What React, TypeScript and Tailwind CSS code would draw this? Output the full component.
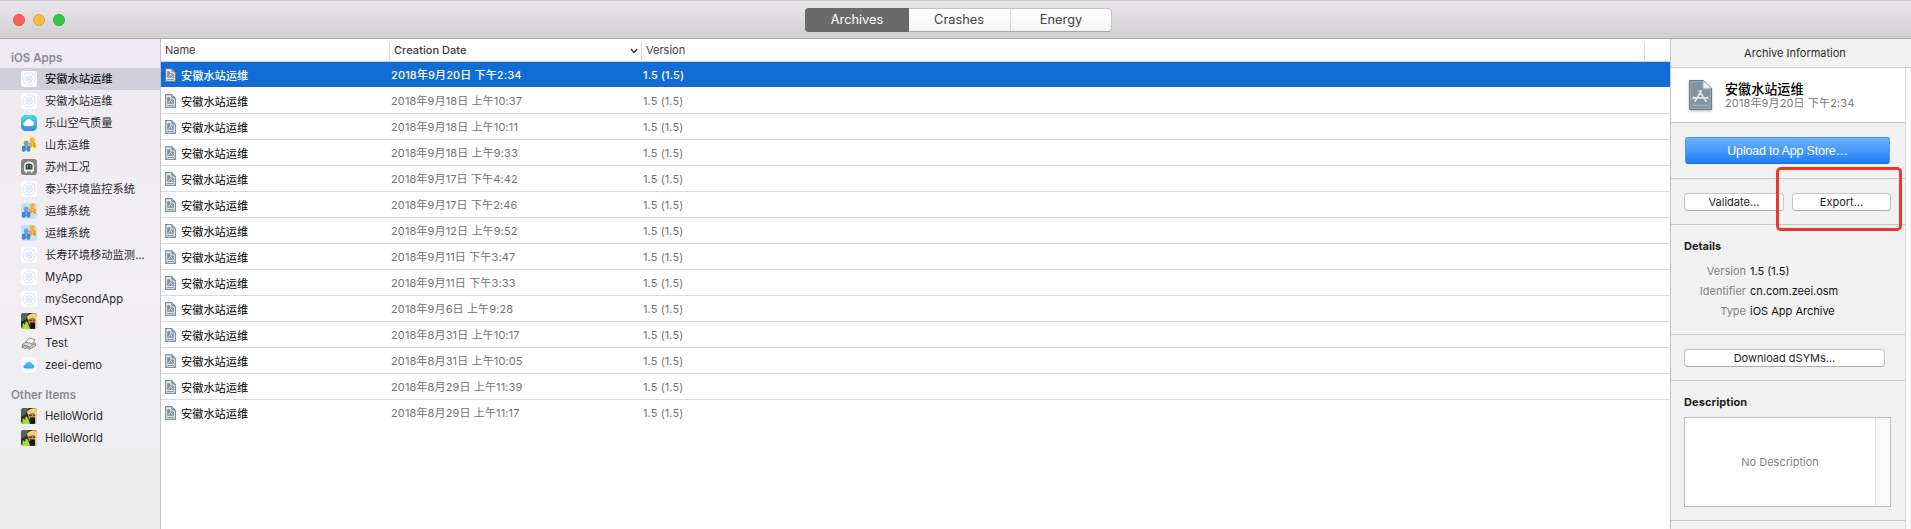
import React from "react";

type IconKind = "ring" | "cloud" | "people" | "peopleBlue" | "train" | "photo" | "printer" | "whiteCloud";

function AppIcon({ kind }: { kind: IconKind }) {
  const cls = "h-4 w-4 shrink-0 overflow-visible";
  switch (kind) {
    case "ring":
      return (
        <svg viewBox="0 0 16 16" className={cls} fill="none">
          <rect width="16" height="16" rx="3.2" fill="#fdfdfe" />
          <circle cx="8" cy="8" r="6.2" stroke="#d5e0ef" strokeWidth=".8" />
          <circle cx="8" cy="8" r="3.2" stroke="#c9d8ee" strokeWidth=".9" />
          <circle cx="8" cy="8" r="1.8" fill="#d9e3f2" />
          <circle cx="12.9" cy="3.2" r=".7" fill="#cdd9e9" />
        </svg>
      );
    case "cloud":
      return (
        <svg viewBox="0 0 16 16" className={cls}>
          <defs>
            <linearGradient id="sky" x1="0" y1="0" x2="0" y2="1">
              <stop offset="0" stopColor="#45dbe4" />
              <stop offset="1" stopColor="#3d8bdf" />
            </linearGradient>
          </defs>
          <rect width="16" height="16" rx="4.4" fill="url(#sky)" />
          <path d="M4.7 11a2.3 2.3 0 0 1-.2-4.6 A3.5 3.5 0 0 1 10.9 6a2.6 2.6 0 0 1 .5 5z" fill="#fff" />
        </svg>
      );
    case "people":
    case "peopleBlue":
      return (
        <svg viewBox="0 0 16 16" className={cls}>
          <rect width="16" height="16" rx="3.4" fill={kind === "people" ? "#fbf1cb" : "#c4e1f7"} />
          <circle cx="11.3" cy="2.9" r="2.6" fill="#f5b53c" />
          <path d="M8 6Q11.3 4 14.8 6V10.4Q13.6 11.6 12.4 10.4L11.4 8.8 10.2 10.4Q8.8 11 8 10z" fill="#eda12a" />
          <circle cx="5.2" cy="6" r="2.5" fill="#68a4e4" />
          <path d="M1 9.4Q5.2 7 9.2 9.4V14Q8 15.4 6.5 14.4L5.2 12.8 3.8 14.4Q2 15.4 1 14z" fill="#4384d4" />
          <path d="M4.2 9.4h2L5.2 12z" fill="#9cc7f3" />
          <path d="M10.4 6.2h2l-1 2z" fill="#fbd88c" />
        </svg>
      );
    case "train":
      return (
        <svg viewBox="0 0 16 16" className={cls}>
          <rect width="16" height="16" rx="3" fill="#85837f" />
          <path d="M3 12.6V6.4Q3.4 2.4 8 2.4T13 6.4V12.6H11.4V14H10V12.6H6V14H4.6V12.6z" fill="#e9ebe9" />
          <path d="M4.6 10.6V6.2Q5 4.6 8 4.6T11.4 6.2V10.6z" fill="#3b4745" />
          <path d="M6.4 6v2.6M9.6 6v2.6" stroke="#8ca3a4" strokeWidth="1.1" />
        </svg>
      );
    case "photo":
      return (
        <svg viewBox="0 0 16 16" className={cls}>
          <defs>
            <clipPath id="photoClip"><rect width="16" height="16" rx="3" /></clipPath>
          </defs>
          <g clipPath="url(#photoClip)">
            <rect width="16" height="16" fill="#2a2b24" />
            <path d="M0 0h8L5 6 0 9z" fill="#5d5f5a" />
            <path d="M6 4Q9-.6 16 .6V7L11.4 5 7 7z" fill="#ecd07a" />
            <path d="M7 6.4L11.4 5 15 6.6V11H8z" fill="#c58b4c" />
            <path d="M8 7.2h3M12 7.2h2.4" stroke="#2b1d12" strokeWidth=".9" />
            <path d="M1 16L2 10 4 12 4.8 8 7 10 9 16z" fill="#a8e02c" />
            <path d="M9 9.4h5V15H10.4z" fill="#15130f" />
            <path d="M14.4 6l1.6-1v11h-2z" fill="#e4da96" />
          </g>
        </svg>
      );
    case "printer":
      return (
        <svg viewBox="0 0 16 16" className={cls} stroke="#7e7e79" strokeWidth=".8" strokeLinejoin="round">
          <path d="M1.4 9.6L6 6.4 14.4 8.4V11L8.6 14 1.4 11.6z" fill="#d9d9d7" />
          <path d="M4.6 7.2L8 3 14 4.6 11.4 9z" fill="#f5f5f3" />
          <path d="M1.4 9.6L8.6 11.8V14M8.6 11.8L14.4 8.6" fill="none" />
          <path d="M.6 12L4.2 10.4 7.4 11.6 4 13.6z" fill="#c9c9c6" />
        </svg>
      );
    case "whiteCloud":
      return (
        <svg viewBox="0 0 16 16" className={cls}>
          <defs>
            <linearGradient id="aqua" x1="0" y1="0" x2="0" y2="1">
              <stop offset="0" stopColor="#4bcdec" />
              <stop offset="1" stopColor="#389be9" />
            </linearGradient>
          </defs>
          <rect width="16" height="16" rx="5" fill="#f6fafc" />
          <path d="M4.6 11.6a2.1 2.1 0 0 1-.2-4.2A3.5 3.5 0 0 1 11 6.8a2.45 2.45 0 0 1 .4 4.8z" fill="url(#aqua)" />
        </svg>
      );
  }
}

function ArchiveIcon({ selected }: { selected: boolean }) {
  return (
    <svg viewBox="0 0 11 14" className="h-[14px] w-[11px] shrink-0" fill="none">
      <path d="M.6 .6H6.6L10.4 4.4V13.4H.6z" fill={selected ? "#f3f5f7" : "#e6eaee"} stroke={selected ? "#6f7a86" : "#8592a0"} strokeWidth="1.2" />
      <path d="M6.4 .6V4.6H10.4z" fill="#8592a0" />
      <path d="M2.2 3.2H5.2V5.6H8.8V9.8H2.2z" fill="#7d8b9a" />
      <path d="M3.6 8.8L5.5 6.2 7.4 8.8" stroke="#eef1f4" strokeWidth=".9" />
      <path d="M2.2 11.4H8.8" stroke="#7d8b9a" />
    </svg>
  );
}

function LargeArchiveIcon() {
  return (
    <svg viewBox="0 0 23 30" className="h-[30px] w-[23px] shrink-0 overflow-visible drop-shadow-[0_1px_1px_rgba(0,0,0,0.3)]" fill="none">
      <path d="M.5 .5H14.5L22.5 8V29.5H.5z" fill="#8493a0" stroke="#74818d" />
      <path d="M1.8 1.8H14V8.8H21.2V28.2H1.8z" stroke="#a5b0ba" strokeWidth=".7" />
      <path d="M14.4 .8V8.2H22.2z" fill="#f0f2f4" stroke="#c3cad1" strokeWidth=".6" />
      <g stroke="#dfe5ea" strokeWidth="1.7" strokeLinecap="round">
        <path d="M12.2 11L6 21.4M10.4 11L17 21.4M4.4 17.8H18.6" />
        <path d="M4.2 16.6V19.2M18.8 16.6V19.2" strokeWidth=".8" />
      </g>
      <path d="M3.4 25.2H19.6" stroke="#adb8c2" />
    </svg>
  );
}

const apps: { name: string; icon: IconKind }[] = [
  { name: "安徽水站运维", icon: "ring" },
  { name: "安徽水站运维", icon: "ring" },
  { name: "乐山空气质量", icon: "cloud" },
  { name: "山东运维", icon: "people" },
  { name: "苏州工况", icon: "train" },
  { name: "泰兴环境监控系统", icon: "ring" },
  { name: "运维系统", icon: "peopleBlue" },
  { name: "运维系统", icon: "peopleBlue" },
  { name: "长寿环境移动监测…", icon: "ring" },
  { name: "MyApp", icon: "ring" },
  { name: "mySecondApp", icon: "ring" },
  { name: "PMSXT", icon: "photo" },
  { name: "Test", icon: "printer" },
  { name: "zeei-demo", icon: "whiteCloud" },
];

const others: { name: string; icon: IconKind }[] = [
  { name: "HelloWorld", icon: "photo" },
  { name: "HelloWorld", icon: "photo" },
];

const dates = [
  "2018年9月20日 下午2:34",
  "2018年9月18日 上午10:37",
  "2018年9月18日 上午10:11",
  "2018年9月18日 上午9:33",
  "2018年9月17日 下午4:42",
  "2018年9月17日 下午2:46",
  "2018年9月12日 上午9:52",
  "2018年9月11日 下午3:47",
  "2018年9月11日 下午3:33",
  "2018年9月6日 上午9:28",
  "2018年8月31日 上午10:17",
  "2018年8月31日 上午10:05",
  "2018年8月29日 上午11:39",
  "2018年8月29日 上午11:17",
];

function SidebarRow({ name, icon, selected = false }: { name: string; icon: IconKind; selected?: boolean }) {
  return (
    <li className={`flex h-[22px] items-center gap-2 pl-[21px] ${selected ? "bg-[#d0ced9] font-medium text-[#1c1b20]" : "text-[#2b2a2e]"}`}>
      <AppIcon kind={icon} />
      <span className="pt-px text-[11.25px] leading-[21px] whitespace-nowrap">{name}</span>
    </li>
  );
}

function PushButton({ children, className }: { children: React.ReactNode; className: string }) {
  return (
    <button className={`h-[18px] rounded-[4px] border border-[#c6c6c6] border-b-[#adadad] bg-white text-center text-[11px] leading-[16px] text-[#1e1e1e] ${className}`}>
      {children}
    </button>
  );
}

function Detail({ label, value }: { label: string; value: string }) {
  return (
    <div className="flex h-5 items-center gap-1">
      <dt className="w-[62px] text-right text-[#838383]">{label}</dt>
      <dd className="whitespace-nowrap text-[#111]">{value}</dd>
    </div>
  );
}

export default function App() {
  return (
    <div className="flex h-[529px] w-[1911px] flex-col overflow-hidden bg-white font-[Inter,'Noto_Sans_CJK_SC',sans-serif] text-[11px]">
      <header className="flex h-[39px] shrink-0 items-center border-t border-b border-t-[#c9c7ca] border-b-[#aeacaf] bg-linear-to-b from-[#e9e7ea] to-[#d1cfd2]">
        <div className="flex w-[805px] gap-2 pl-[13px]">
          <span className="h-3 w-3 rounded-full border border-[#e2504c] bg-[#fc605c]" />
          <span className="h-3 w-3 rounded-full border border-[#dfa33a] bg-[#fdbc40]" />
          <span className="h-3 w-3 rounded-full border border-[#2eae3c] bg-[#34c84a]" />
        </div>
        <nav className="flex h-6 w-[307px] rounded-[4px] border border-[#c6c4c7] border-b-[#aaa8ab] bg-linear-to-b from-white to-[#f5f4f5] text-[12.8px] leading-[22px] text-[#434343]">
          <button className="-m-px w-[104px] rounded-l-[4px] bg-[#6b6a6b] pt-px text-white">Archives</button>
          <button className="w-[102px]">Crashes</button>
          <button className="flex-1 border-l border-[#d6d5d6]">Energy</button>
        </nav>
      </header>

      <div className="flex min-h-0 flex-1">
        <aside className="w-[161px] shrink-0 border-r border-[#c3c2c4] bg-linear-to-b from-[#edebf1] via-[#f1eff2] to-[#ededee]">
          <h2 className="h-[29px] pt-[11px] pl-[11px] text-[11.5px] leading-[17px] font-semibold text-[#8c8a90]">iOS Apps</h2>
          <ul>
            {apps.map((a, i) => (
              <SidebarRow key={i} {...a} selected={i === 0} />
            ))}
          </ul>
          <h2 className="h-[29px] pt-[11px] pl-[11px] text-[11.5px] leading-[17px] font-semibold text-[#8c8a90]">Other Items</h2>
          <ul>
            {others.map((a, i) => (
              <SidebarRow key={i} {...a} />
            ))}
          </ul>
        </aside>

        <main className="w-[1509px] shrink-0 bg-white">
          <div className="flex h-[23px] items-center border-b border-[#d0d0d0] pt-px text-[#3c3c3c]">
            <span className="w-[228px] pl-1">Name</span>
            <span className="flex h-[18px] w-[252px] items-center justify-between border-l border-[#dcdcdc] pr-[3px] pl-1 font-medium tracking-[0.05px]">
              Creation Date
              <svg viewBox="0 0 8 6" className="h-1.5 w-2" fill="none" stroke="#333" strokeWidth="1.5">
                <path d="M1 1L4 4.4L7 1" />
              </svg>
            </span>
            <span className="flex h-[18px] w-[1004px] items-center border-r border-l border-[#dcdcdc] pl-1">Version</span>
          </div>
          {dates.map((d, i) => (
            <div
              key={i}
              className={`flex h-[26px] items-center border-b pt-px ${i === 0 ? "border-white bg-[#126cd6] bg-clip-padding font-medium text-white" : i === 13 ? "border-transparent text-[#747474]" : "border-[#dadada] text-[#747474]"}`}
            >
              <div className="flex w-[230px] items-center gap-[5px] pl-1">
                <ArchiveIcon selected={i === 0} />
                <span className={`pt-px text-[11.2px] leading-[18px] ${i === 0 ? "text-white" : "text-black"}`}>安徽水站运维</span>
              </div>
              <span className="w-[252px] pt-px tracking-[0.13px]">{d}</span>
              <span className="pt-px tracking-[0.1px]">1.5 (1.5)</span>
            </div>
          ))}
        </main>

        <aside className="relative flex min-w-0 flex-1 flex-col border-l border-[#c4c4c4] bg-[#f1f1f1]">
          <h2 className="h-[29px] border-b border-[#c9c9c9] pr-0 pl-2 text-center text-[11px] leading-[28px] text-[#2b2b2b]">Archive Information</h2>
          <div className="flex min-h-0 flex-1">
            <div className="w-[235px] shrink-0 border-r border-[#dedede]">
              <section className="flex h-[55px] items-center gap-[13px] border-b border-[#c9c9c9] bg-white pl-[18px]">
                <LargeArchiveIcon />
                <div className="pt-px">
                  <p className="text-[13.1px] leading-[15px] font-medium text-black">安徽水站运维</p>
                  <p className="text-[11px] leading-[13px] tracking-[0.13px] text-[#7b7b7b]">2018年9月20日 下午2:34</p>
                </div>
              </section>
              <section className="h-14 border-b border-[#c9c9c9] px-[14px] pt-[14px]">
                <button className="h-[27px] w-[205px] rounded-[3px] border border-[#4a97ec] border-b-[#1b6fdf] bg-linear-to-b from-[#6db3fa] to-[#1a7dfa] pt-px font-['Liberation_Sans',sans-serif] text-[12.5px] tracking-[-0.2px] text-white">
                  Upload to App Store…
                </button>
              </section>
              <section className="flex h-[46px] gap-2 border-b border-[#c9c9c9] pt-[14px] pl-[13px]">
                <PushButton className="w-[100px]">Validate…</PushButton>
                <PushButton className="w-[99px]">Export…</PushButton>
              </section>
              <section className="h-[110px] border-b border-[#c9c9c9] pt-[13px] pl-[13px]">
                <h3 className="h-[23px] text-[11px] leading-4 font-bold text-[#222]">Details</h3>
                <dl>
                  <Detail label="Version" value="1.5 (1.5)" />
                  <Detail label="Identifier" value="cn.com.zeei.osm" />
                  <Detail label="Type" value="iOS App Archive" />
                </dl>
              </section>
              <section className="flex h-[46px] border-b border-[#c9c9c9] pt-[14px] pl-[13px]">
                <PushButton className="w-[201px]">Download dSYMs…</PushButton>
              </section>
              <section className="h-[140px] border-b border-[#c9c9c9] pt-[13px] pl-[13px]">
                <h3 className="h-[23px] text-[11px] leading-4 font-bold tracking-[0.1px] text-[#222]">Description</h3>
                <div className="flex h-[90px] w-[207px] border border-[#bdbdbd] bg-white">
                  <span className="flex w-[190px] items-center justify-center text-[#838383]">No Description</span>
                  <span className="flex-1 border-l border-[#e2e2e2] bg-[#f9f9f9]" />
                </div>
              </section>
            </div>
            <div className="flex-1 bg-[#fafafa]" />
          </div>
          <div className="pointer-events-none absolute top-[128px] left-[105px] h-[64px] w-[126px] rounded-[5px] border-[3px] border-[#e8382d]" />
        </aside>
      </div>
    </div>
  );
}
